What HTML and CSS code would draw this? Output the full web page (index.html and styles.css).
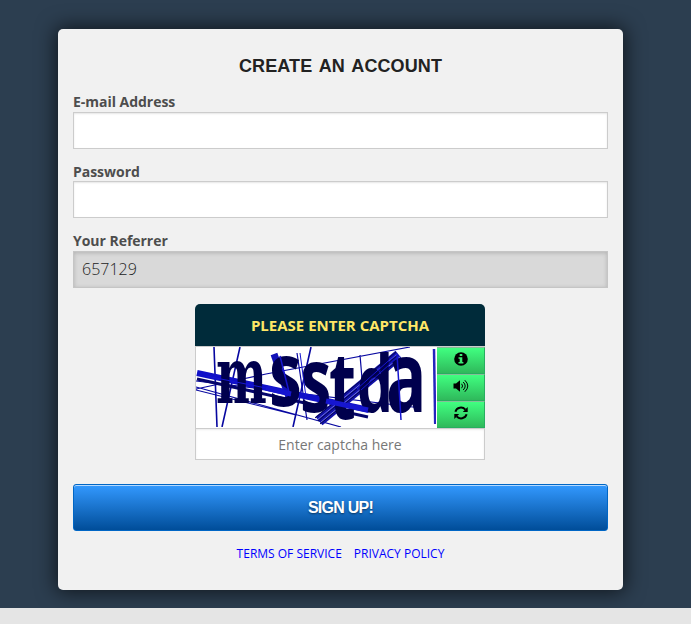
FILE: index.html
```html
<!DOCTYPE html>
<html lang="en">
<head>
<meta charset="utf-8">
<title>Create an account</title>
<link rel="stylesheet" href="styles.css">
</head>
<body>
<main class="stage">
<form class="card">
<h1 class="title">CREATE AN ACCOUNT</h1>
<div class="field"><label for="email">E-mail Address</label><input id="email" type="text"></div>
<div class="field"><label for="pass">Password</label><input id="pass" type="password"></div>
<div class="field"><label for="ref">Your Referrer</label><input id="ref" type="text" value="657129" disabled></div>
<section class="captcha">
<div class="captcha-title">PLEASE ENTER CAPTCHA</div>
<div class="captcha-row">
<svg class="captcha-image" viewBox="0 0 240 80" width="240" height="80">
<g fill="none" stroke="#0707a0">
<path stroke-width="1.6" d="M18 0L21 80M44 0L26 80M115 0L97 80"/>
<path stroke-width="1.2" d="M0 42L70 27L214 0M0 40L145 80M0 43L100 68M0 34L225 61M164 8L168 55M101 6L111 73"/>
<path stroke="#1010c8" stroke-width="6" d="M1 26L173 63"/>
<path stroke="#05056c" stroke-width="3" d="M1 32L172 70"/>
<path stroke="#2525bd" stroke-width="2.5" d="M238 2L239.2 77"/>
<path stroke="#1010a8" stroke-width="11" d="M123 74L203 8"/>
<path stroke="#050550" d="M119 71L200 5M122 74L202 8M124 77L205 11"/>
<path stroke="#9a9af0" stroke-width=".7" d="M121 73L201 7M125 75L205 9"/>
<path stroke="#1212b8" stroke-width="7" d="M78 7L93 50"/>
</g>
<g class="captcha-letters">
<text class="serif" transform="translate(20 56) scale(.48 .79)">m</text>
<text transform="translate(73 59) scale(.66 .9)">s</text>
<text transform="translate(104 65) scale(.63 .9)">s</text>
<text transform="translate(133 72) scale(.62 .94)">t</text>
<text transform="translate(161 65) scale(.57 .79)">d</text>
<text transform="translate(190 65) scale(.67 .99)">a</text>
</g>
<g fill="none" stroke="#1616d0"><path stroke-width="1.5" d="M201 7L205 73M84 9L94 49"/><path stroke-width="5" d="M70 41L95 47M130 54L172 63"/><path d="M10 29L70 41M104 6L110 50M165 43L203 9M161 42L200 7"/></g>
</svg>
<div class="tools">
<button type="button" aria-label="Help"><svg width="14" height="14" viewBox="0 0 14 14"><circle cx="7" cy="7" r="6.8"/><path fill="#3bea74" d="M5.7 2h2.6v2H5.7zM4.5 5.2h3.8v4.7h1.1v1.6H4.5V9.9h1.2V6.8H4.5z"/></svg></button>
<button type="button" aria-label="Audio"><svg width="16" height="14" viewBox="0 0 16 14"><path d="M.5 4.5H3L7 1.2v11.6L3 9.5H.5z"/><path fill="none" stroke="#000" d="M8.6 4.8q2 2.2 0 4.4M10.2 3q4 4 0 8M11.8 1.2q6 5.8 0 11.6"/></svg></button>
<button type="button" aria-label="Refresh"><svg width="14" height="14" viewBox="0 0 14 14"><path fill="none" stroke="#000" stroke-width="2" d="M1.4 5.7C2.7 1.2 8.4.3 11.4 3.6M12.6 8.3C11.3 12.8 5.6 13.7 2.6 10.4"/><path d="M13.7 1v5H8.8zM.3 13V8h4.9z"/></svg></button>
</div>
</div>
<input class="captcha-entry" type="text" placeholder="Enter captcha here">
</section>
<button class="submit" type="button">SIGN UP!</button>
<nav class="links"><a href="#">TERMS OF SERVICE</a><a href="#">PRIVACY POLICY</a></nav>
</form>
</main>
</body>
</html>
```
FILE: styles.css
```css
*{box-sizing:border-box}
body{margin:0;background:#e5e5e5;font-family:"Open Sans",sans-serif;height:624px;overflow:hidden}
.stage{height:608px;background:#2c3e50;padding:29px 68px 0 58px;overflow:hidden}
.card{height:561px;background:#f1f1f1;border-radius:5px;padding:24px 15px 0;box-shadow:0 0 20px 2px rgba(0,0,0,.65)}
.title{margin:0;height:39px;text-align:center;font:bold 18px/26px "Liberation Sans",sans-serif;letter-spacing:.1px;word-spacing:2px;color:#222}
.field{height:69.5px}
.field label{display:block;height:19.6px;line-height:19px;font-size:14px;font-weight:700;letter-spacing:-.03px;color:#4d4d4d}
.field input{display:block;width:100%;height:37px;border:1px solid #ccc;padding:0 8px 1px;background:#fff;box-shadow:inset 0 1px 2px rgba(0,0,0,.1);font:300 16px "Open Sans",sans-serif;color:#333}
.field input:disabled{background:#d9d9d9;border-color:#c5c5c5;box-shadow:inset 0 1px 4px rgba(0,0,0,.18);color:#222}
.captcha{width:290px;height:156px;margin:3.5px 0 0 122px}
.captcha-title{height:42px;border-radius:5px 5px 0 0;background:#002b3a;color:#ffe766;text-align:center;font-size:15px;font-weight:700;line-height:43px}
.captcha-row{display:flex;height:82px;border:1px solid #ccc;border-bottom:0;border-right:0;background:#fff}
.captcha-image{display:block;flex:none}
.captcha-letters{font:bold 100px "Open Sans",sans-serif;fill:#00004d}
.captcha-letters .serif{font:bold 100px "DejaVu Serif",serif}
.tools{width:48px;margin-left:1px;display:grid;grid-template-rows:repeat(3,27px)}
.tools button{display:flex;align-items:center;justify-content:center;padding:0 0 3px;border:1px solid #27ae60;border-top-color:#85bd98;border-left:0;background:linear-gradient(#40ff80,#2fb95b)}
.tools svg{display:block}
.captcha-entry{display:block;width:290px;height:32px;border:1px solid #ccc;padding:0;text-align:center;background:#fff;font:14px "Open Sans",sans-serif;color:#555;box-shadow:inset 0 1px 2px rgba(0,0,0,.08)}
.captcha-entry::placeholder{color:#777;opacity:1}
.submit{display:block;width:100%;height:47px;margin-top:24px;padding:0;border:1px solid #0066c5;border-radius:3px;background:linear-gradient(#3399ff,#004d99);box-shadow:inset 0 1px 0 #b3d9ff;color:#fff;font:bold 16px "Liberation Sans",sans-serif;letter-spacing:-.75px;text-shadow:0 1px 2px rgba(0,0,0,.5)}
.links{display:flex;justify-content:center;gap:12px;margin-top:14px;font-size:12px;line-height:17px}
.links a{color:#00f;text-decoration:none}
```
